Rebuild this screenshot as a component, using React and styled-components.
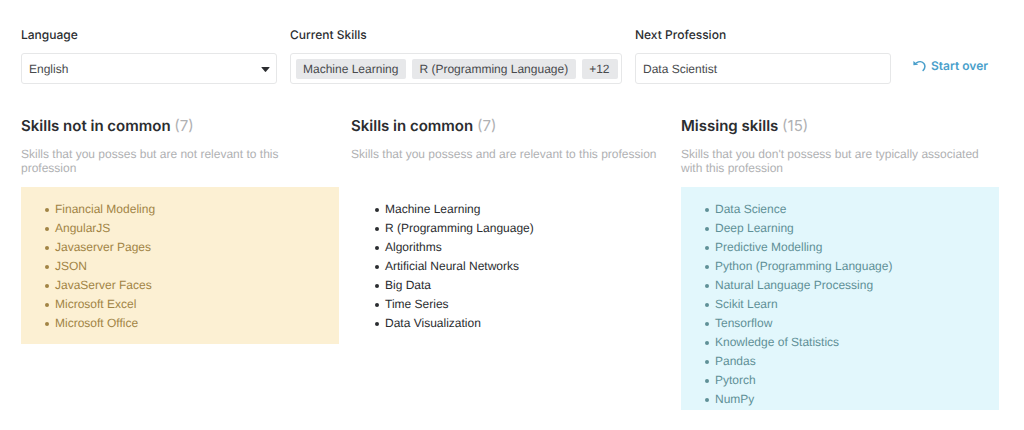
import React from "react";
import styled, { createGlobalStyle } from "styled-components";

const GlobalStyle = createGlobalStyle`
  *, *::before, *::after { box-sizing: border-box; }
  body {
    margin: 0;
    background: #fff;
    color: #2b2d30;
    font-family: "Liberation Sans", Arial, sans-serif;
    font-size: 12px;
    line-height: 16px;
    text-rendering: geometricPrecision;
  }
  button, input, select { font: inherit; color: inherit; text-rendering: inherit; }
`;

const headingFont = `Inter, "Liberation Sans", sans-serif`;

const Page = styled.main`
  padding: 27px 25px 20px 21px;
`;

const Filters = styled.form`
  display: grid;
  grid-template-columns: 256fr 332fr 256fr 95fr;
  column-gap: 13px;
  align-items: end;
`;

const Field = styled.div`
  display: flex;
  flex-direction: column;
  gap: 10px;
  min-width: 0;
`;

const Label = styled.label`
  font-family: ${headingFont};
  font-weight: 500;
`;

const control = `
  width: 100%;
  height: 31px;
  border: 1px solid #e6e7e8;
  border-radius: 3px;
  background: #fff;
  color: #484a4d;
`;

const SelectWrap = styled.div`
  position: relative;
`;

const Select = styled.select`
  ${control}
  display: block;
  appearance: none;
  padding: 0 24px 0 7px;
`;

const Caret = styled.svg`
  position: absolute;
  right: 7px;
  top: 14px;
  pointer-events: none;
`;

const TextInput = styled.input`
  ${control}
  padding: 0 7px;
`;

const TagPicker = styled.button`
  ${control}
  display: flex;
  align-items: center;
  gap: 6px;
  padding: 0 5px;
  overflow: hidden;
  white-space: nowrap;
`;

const Tag = styled.span`
  padding: 2px 8px 2px 7px;
  border-radius: 2px;
  background: #e7e8ea;
`;

const StartOver = styled.button`
  display: flex;
  align-items: center;
  justify-self: start;
  gap: 5px;
  margin: 0 0 10px 9px;
  padding: 0;
  border: 0;
  background: none;
  color: #4a9fcb;
  font-family: ${headingFont};
  font-weight: 600;
  white-space: nowrap;
`;

const Columns = styled.div`
  display: grid;
  grid-template-columns: repeat(3, 1fr);
  grid-template-rows: auto auto auto;
  column-gap: 12px;
  margin-top: 32px;
`;

const Column = styled.section`
  display: grid;
  grid-row: span 3;
  grid-template-rows: subgrid;
  align-items: start;
`;

const Title = styled.h2`
  margin: 0;
  font-family: ${headingFont};
  font-size: 15px;
  line-height: 20px;
  font-weight: 600;
`;

const Count = styled.span`
  color: #b0b1b3;
  font-weight: 400;
`;

const Description = styled.p`
  margin: 11px 0 12px;
  padding-right: 6px;
  color: #b0b1b3;
  line-height: 14px;
`;

const tones = {
  amber: { background: "#fcf0d3", color: "#a18445" },
  plain: { background: "transparent", color: "#2b2d30" },
  cyan: { background: "#e2f7fc", color: "#5f9097" },
};

const SkillList = styled.ul`
  margin: 0;
  padding: 13px 12px ${(p) => (p.$cutOff ? 1 : 11)}px 24px;
  background: ${(p) => tones[p.$tone].background};
  color: ${(p) => tones[p.$tone].color};
  line-height: 19px;
  list-style: none;
`;

const Skill = styled.li`
  display: flex;
  align-items: center;
  gap: 6px;

  &::before {
    content: "";
    width: 4px;
    height: 4px;
    border-radius: 50%;
    background: currentColor;
  }
`;

const groups = [
  {
    title: "Skills not in common",
    count: 7,
    description: "Skills that you posses but are not relevant to this profession",
    tone: "amber",
    skills: ["Financial Modeling", "AngularJS", "Javaserver Pages", "JSON", "JavaServer Faces", "Microsoft Excel", "Microsoft Office"],
  },
  {
    title: "Skills in common",
    count: 7,
    description: "Skills that you possess and are relevant to this profession",
    tone: "plain",
    skills: ["Machine Learning", "R (Programming Language)", "Algorithms", "Artificial Neural Networks", "Big Data", "Time Series", "Data Visualization"],
  },
  {
    title: "Missing skills",
    count: 15,
    description: "Skills that you don't possess but are typically associated with this profession",
    tone: "cyan",
    skills: ["Data Science", "Deep Learning", "Predictive Modelling", "Python (Programming Language)", "Natural Language Processing", "Scikit Learn", "Tensorflow", "Knowledge of Statistics", "Pandas", "Pytorch", "NumPy"],
  },
];

export default function App() {
  return (
    <Page>
      <GlobalStyle />
      <Filters onSubmit={(e) => e.preventDefault()}>
        <Field>
          <Label htmlFor="language">Language</Label>
          <SelectWrap>
            <Select id="language" defaultValue="English">
              <option>English</option>
            </Select>
            <Caret width="9" height="5" viewBox="0 0 9 5" aria-hidden="true">
              <path d="M0.8 0h7.4q.8 0 .3.6L5.1 4.6q-.6.6-1.2 0L.5.6Q0 0 .8 0z" fill="#2b2d30" />
            </Caret>
          </SelectWrap>
        </Field>
        <Field>
          <Label htmlFor="skills">Current Skills</Label>
          <TagPicker id="skills" type="button">
            <Tag>Machine Learning</Tag>
            <Tag>R (Programming Language)</Tag>
            <Tag>+12</Tag>
          </TagPicker>
        </Field>
        <Field>
          <Label htmlFor="profession">Next Profession</Label>
          <TextInput id="profession" type="text" defaultValue="Data Scientist" />
        </Field>
        <StartOver type="button">
          <svg width="13" height="12" viewBox="0 0 13 12" fill="none" aria-hidden="true">
            <path d="M3.5 2.8C6 1.2 9.3 1.2 11 3.6c1.5 2.3.9 4.8-.9 6.8" stroke="currentColor" strokeWidth="1.5" strokeLinecap="round" />
            <path d="M.4.9v4.4l4.8-.5z" fill="currentColor" />
          </svg>
          Start over
        </StartOver>
      </Filters>
      <Columns>
        {groups.map((g) => (
          <Column key={g.title}>
            <Title>
              {g.title} <Count>({g.count})</Count>
            </Title>
            <Description>{g.description}</Description>
            <SkillList $tone={g.tone} $cutOff={g.count > g.skills.length}>
              {g.skills.map((s) => (
                <Skill key={s}>{s}</Skill>
              ))}
            </SkillList>
          </Column>
        ))}
      </Columns>
    </Page>
  );
}
